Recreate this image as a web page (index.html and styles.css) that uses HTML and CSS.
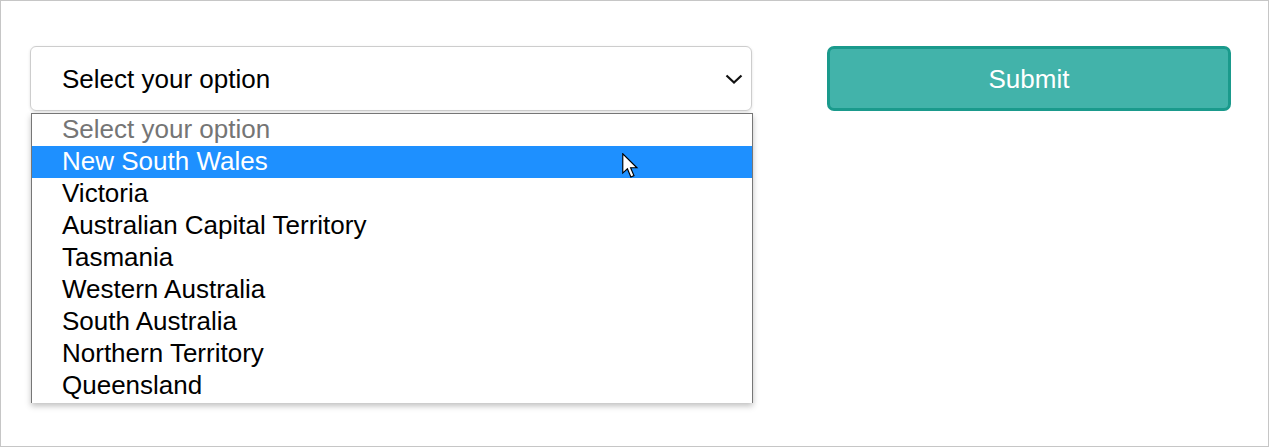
FILE: index.html
```html
<!DOCTYPE html>
<html>
<head>
<meta charset="utf-8">
<link rel="stylesheet" href="styles.css">
</head>
<body>
<div class="frame">
  <div class="row">
    <div class="select-col">
      <div class="select">
        <span>Select your option</span>
        <svg class="chev" width="18" height="10" viewBox="0 0 18 10"><path d="M1.5 1.5 L9 8.5 L16.5 1.5" fill="none" stroke="#111" stroke-width="2.2"/></svg>
      </div>
      <ul class="list">
        <li class="placeholder">Select your option</li>
        <li class="active">New South Wales</li>
        <li>Victoria</li>
        <li>Australian Capital Territory</li>
        <li>Tasmania</li>
        <li>Western Australia</li>
        <li>South Australia</li>
        <li>Northern Territory</li>
        <li>Queensland</li>
      </ul>
    </div>
    <button class="submit">Submit</button>
  </div>
  <svg class="cursor" width="18" height="27" viewBox="0 0 14 21"><path d="M0.6 0.6 L0.6 15.6 L4.2 12.3 L6.9 18.6 L9.3 17.6 L6.7 11.5 L11.6 11.5 Z" fill="#fff" stroke="#000" stroke-width="0.9" stroke-linejoin="miter"/></svg>
</div>
</body>
</html>
```
FILE: styles.css
```css
html, body {
  margin: 0;
  padding: 0;
  background: #fff;
}
body {
  font-family: "Liberation Sans", Arial, sans-serif;
}
.frame {
  position: relative;
  box-sizing: border-box;
  width: 1269px;
  height: 447px;
  border: 1px solid #c6c6c6;
  padding: 45px 0 0 29px;
}
.row {
  display: flex;
  align-items: flex-start;
  gap: 75px;
}
.select-col {
  display: flex;
  flex-direction: column;
  width: 722px;
}
.select {
  box-sizing: border-box;
  height: 65px;
  border: 1px solid #cdcdcd;
  border-radius: 6px;
  box-shadow: 0 1px 3px rgba(0,0,0,0.12);
  display: flex;
  align-items: center;
  justify-content: space-between;
  padding: 2px 8px 0 31px;
  font-size: 26px;
  color: #000;
}
.chev {
  margin-top: -1px;
}
.list {
  list-style: none;
  margin: 2px 0 0 1px;
  padding: 0;
  width: 722px;
  box-sizing: border-box;
  border: 1px solid #767676;
  border-bottom: none;
  box-shadow: 0 3px 6px rgba(0,0,0,0.25);
  background: #fff;
  font-size: 26px;
}
.list li {
  height: 32px;
  line-height: 31px;
  padding-left: 30px;
  color: #000;
  white-space: nowrap;
}
.list li:last-child {
  height: 33px;
}
.list li.placeholder {
  color: #757575;
}
.list li.active {
  background: #1e90ff;
  color: #fff;
}
.submit {
  box-sizing: border-box;
  width: 404px;
  height: 65px;
  background: #42b3aa;
  border: 3px solid #1a9a8c;
  border-radius: 7px;
  color: #fff;
  font-family: "Liberation Sans", Arial, sans-serif;
  font-size: 26px;
  padding: 2px 0 0;
}
.cursor {
  position: absolute;
  left: 621px;
  top: 152px;
}
```
